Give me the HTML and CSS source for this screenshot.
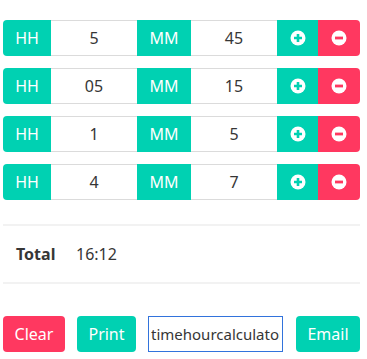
FILE: index.html
```html
<!DOCTYPE html>
<html lang="en">

<head>
    <meta charset="UTF-8">
    <title>Time Hour Calculator</title>
    <link rel="stylesheet" href="styles.css">
</head>

<body>
    <div class="calc">
        <!-- time rows -->
        <div class="rows">
            <div class="time-row">
                <span class="tag first">HH</span>
                <input class="field" type="text" value="5">
                <span class="tag">MM</span>
                <input class="field" type="text" value="45">
                <button class="icon-btn add"><svg width="16" height="16" viewBox="0 0 16 16"><circle cx="8" cy="8" r="7.5" fill="#fff"/><path d="M8 4v8M4 8h8" stroke="#00d1b2" stroke-width="2.6"/></svg></button>
                <button class="icon-btn remove"><svg width="16" height="16" viewBox="0 0 16 16"><circle cx="8" cy="8" r="7.5" fill="#fff"/><path d="M4 8h8" stroke="#ff3860" stroke-width="2.8"/></svg></button>
            </div>
            <div class="time-row">
                <span class="tag first">HH</span>
                <input class="field" type="text" value="05">
                <span class="tag">MM</span>
                <input class="field" type="text" value="15">
                <button class="icon-btn add"><svg width="16" height="16" viewBox="0 0 16 16"><circle cx="8" cy="8" r="7.5" fill="#fff"/><path d="M8 4v8M4 8h8" stroke="#00d1b2" stroke-width="2.6"/></svg></button>
                <button class="icon-btn remove"><svg width="16" height="16" viewBox="0 0 16 16"><circle cx="8" cy="8" r="7.5" fill="#fff"/><path d="M4 8h8" stroke="#ff3860" stroke-width="2.8"/></svg></button>
            </div>
            <div class="time-row">
                <span class="tag first">HH</span>
                <input class="field" type="text" value="1">
                <span class="tag">MM</span>
                <input class="field" type="text" value="5">
                <button class="icon-btn add"><svg width="16" height="16" viewBox="0 0 16 16"><circle cx="8" cy="8" r="7.5" fill="#fff"/><path d="M8 4v8M4 8h8" stroke="#00d1b2" stroke-width="2.6"/></svg></button>
                <button class="icon-btn remove"><svg width="16" height="16" viewBox="0 0 16 16"><circle cx="8" cy="8" r="7.5" fill="#fff"/><path d="M4 8h8" stroke="#ff3860" stroke-width="2.8"/></svg></button>
            </div>
            <div class="time-row">
                <span class="tag first">HH</span>
                <input class="field" type="text" value="4">
                <span class="tag">MM</span>
                <input class="field" type="text" value="7">
                <button class="icon-btn add"><svg width="16" height="16" viewBox="0 0 16 16"><circle cx="8" cy="8" r="7.5" fill="#fff"/><path d="M8 4v8M4 8h8" stroke="#00d1b2" stroke-width="2.6"/></svg></button>
                <button class="icon-btn remove"><svg width="16" height="16" viewBox="0 0 16 16"><circle cx="8" cy="8" r="7.5" fill="#fff"/><path d="M4 8h8" stroke="#ff3860" stroke-width="2.8"/></svg></button>
            </div>
        </div>

        <!-- total -->
        <div class="total">
            <span class="total-label">Total</span>
            <span class="total-value">16:12</span>
        </div>

        <!-- actions -->
        <div class="actions">
            <button class="btn danger">Clear</button>
            <button class="btn primary print">Print</button>
            <input class="share" type="text" value="timehourcalculator.com">
            <button class="btn primary email">Email</button>
        </div>
    </div>
</body>

</html>
```

FILE: styles.css
```css
body {
    font-family: "Noto Sans", "Open Sans", sans-serif;
    margin: 0;
    padding: 0;
    background-color: white;
    color: #363636;
}

.calc {
    margin: 0 7px 0 3px;
    padding-top: 20px;
}

.rows {
    display: flex;
    flex-direction: column;
    gap: 12px;
}

.time-row {
    display: flex;
    height: 36px;
}

.tag {
    width: 54px;
    display: flex;
    align-items: center;
    justify-content: center;
    background-color: #00d1b2;
    color: white;
    font-size: 16px;
}

.tag.first {
    width: 48px;
    border-radius: 4px 0 0 4px;
}

.field {
    width: 86px;
    box-sizing: border-box;
    border: 1px solid #dbdbdb;
    border-left: none;
    border-right: none;
    margin: 0;
    padding: 0;
    text-align: center;
    font-family: inherit;
    font-size: 16px;
    color: #363636;
    outline: none;
}

.icon-btn {
    border: none;
    margin: 0;
    padding: 0;
    display: flex;
    align-items: center;
    justify-content: center;
    cursor: pointer;
}

.icon-btn.add {
    width: 41px;
    background-color: #00d1b2;
}

.icon-btn.remove {
    width: 42px;
    background-color: #ff3860;
    border-radius: 0 4px 4px 0;
}

.total {
    margin-top: 24px;
    border-top: 2px solid #f2f2f2;
    border-bottom: 2px solid #f2f2f2;
    height: 56px;
    display: flex;
    align-items: center;
    font-size: 16px;
}

.total-label {
    font-weight: bold;
    padding-left: 13px;
    width: 60px;
}

.total-value {
    color: #363636;
}

.actions {
    margin-top: 32px;
    display: flex;
    height: 36px;
}

.btn {
    border: none;
    border-radius: 4px;
    color: white;
    font-family: inherit;
    font-size: 16px;
    padding: 0;
    margin: 0 12px 0 0;
    cursor: pointer;
}

.btn.danger {
    background-color: #ff3860;
    width: 62px;
}

.btn.primary {
    background-color: #00d1b2;
}

.btn.print {
    width: 59px;
}

.btn.email {
    margin-right: 0;
    width: 64px;
}

.share {
    width: 135px;
    box-sizing: border-box;
    border: 1px solid #3273dc;
    margin: 0 13px 0 0;
    padding: 0 2px;
    font-family: inherit;
    font-size: 15px;
    color: #363636;
    outline: none;
}
```
